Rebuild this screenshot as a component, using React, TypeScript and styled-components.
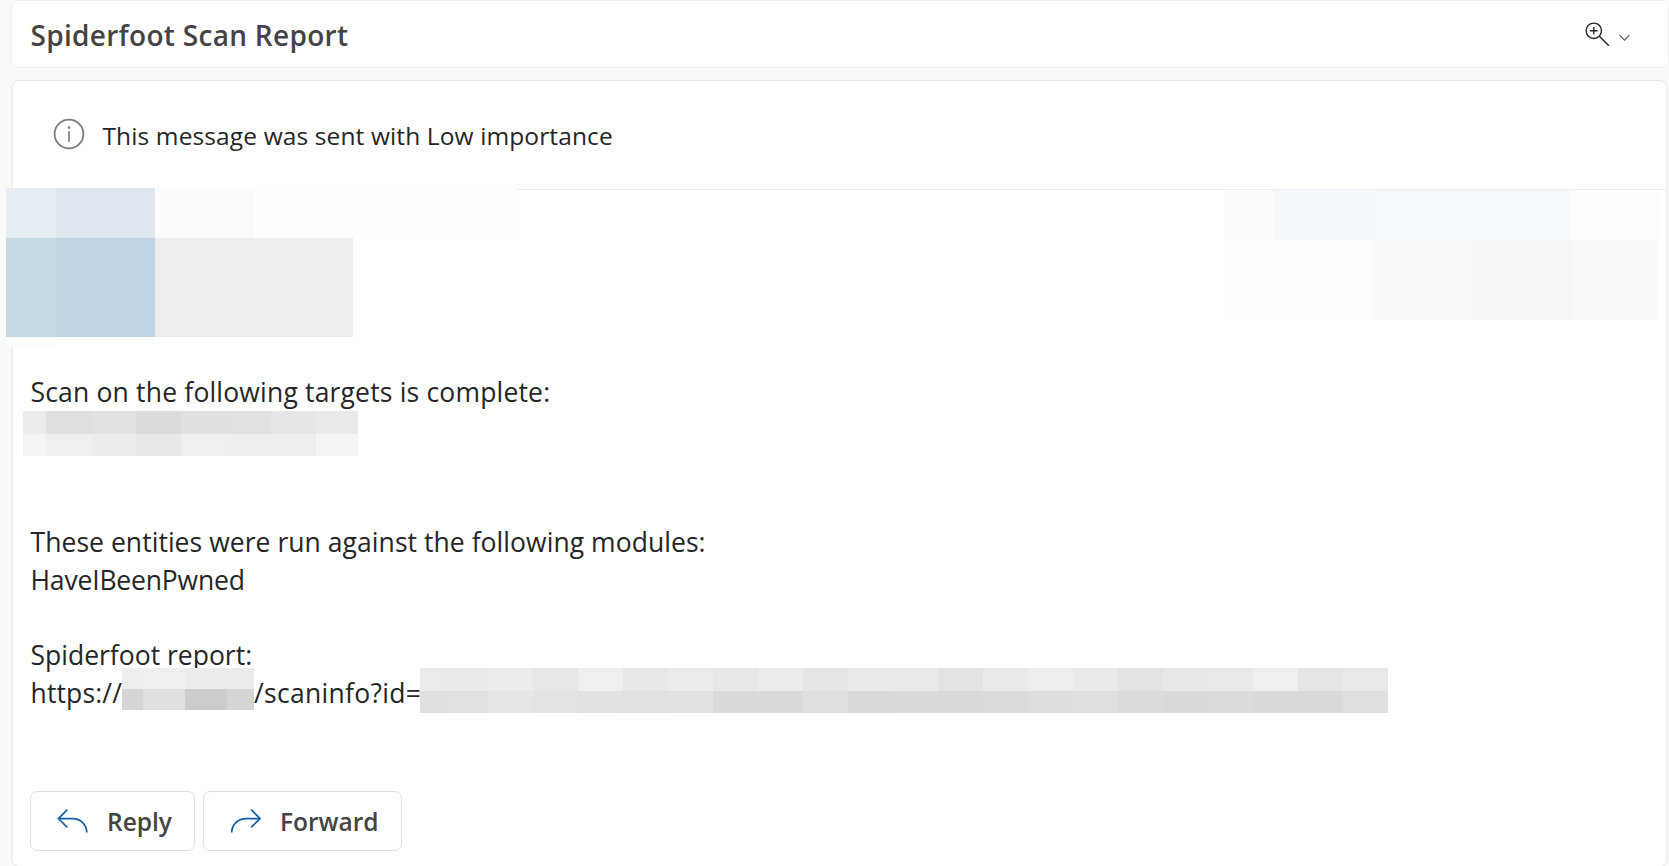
import React from "react";
import styled, { createGlobalStyle } from "styled-components";

const GlobalStyle = createGlobalStyle`
  * { box-sizing: border-box; }
  body {
    margin: 0;
    background: #fafafa;
    color: #262626;
    font-family: "Segoe UI", "Open Sans", "Noto Sans", sans-serif;
    overflow: hidden;
  }
`;

const Page = styled.div`
  display: flex;
  flex-direction: column;
  gap: 12px;
  height: 866px;
  padding-left: 11px;
  overflow: hidden;
`;

const Header = styled.header`
  display: flex;
  flex-shrink: 0;
  align-items: center;
  justify-content: space-between;
  height: 68px;
  padding: 0 38px 0 18.5px;
  background: #fff;
  border: 1px solid #efefef;
  border-radius: 7px;
`;

const Title = styled.h1`
  margin: 1px 0 0;
  font-size: 28px;
  font-weight: 600;
  line-height: 38px;
  letter-spacing: 0.3px;
  color: #444;
  white-space: nowrap;
`;

const ZoomButton = styled.button`
  display: flex;
  align-items: center;
  gap: 9px;
  padding: 0;
  border: 0;
  background: none;
`;

const Card = styled.main`
  display: flex;
  flex-direction: column;
  height: 787px;
  flex-shrink: 0;
  margin-right: 1px;
  background: #fff;
  border: 1px solid #e8e8e8;
  border-left: 2px solid #f0f0f0;
  border-right: 2px solid #f0f0f0;
  border-radius: 8px;
`;

const Notice = styled.div`
  display: flex;
  align-items: center;
  gap: 17.5px;
  height: 109px;
  padding: 0 0 2px 40px;
  border-bottom: 1px solid #ececec;
`;

const NoticeText = styled.span`
  padding-top: 2px;
  font-size: 24.5px;
  letter-spacing: 0.12px;
  white-space: nowrap;
`;

const Sender = styled.section`
  display: flex;
  justify-content: space-between;
  align-items: flex-start;
  height: 184px;
  padding-right: 8px;
`;

const Mosaic = styled.div<{ $cols: string; $rows: string; $margin?: string }>`
  position: relative;
  display: grid;
  flex-shrink: 0;
  grid-template-columns: ${(p) => p.$cols};
  grid-template-rows: ${(p) => p.$rows};
  margin: ${(p) => p.$margin ?? "0"};
`;

const Cell = styled.i<{ $tone: string }>`
  background: ${(p) => p.$tone};
`;

const Body = styled.section`
  padding-left: 17.5px;
`;

const Line = styled.div<{ $spacing?: number }>`
  display: flex;
  align-items: flex-start;
  height: 37.6px;
  font-size: 26.5px;
  line-height: 37.6px;
  letter-spacing: ${(p) => p.$spacing ?? 0}px;
  white-space: nowrap;
`;

const UrlPart = styled.span<{ $width: number; $spacing: number }>`
  width: ${(p) => p.$width}px;
  line-height: 36.4px;
  letter-spacing: ${(p) => p.$spacing}px;
`;

const Actions = styled.div`
  display: flex;
  gap: 8px;
  margin-top: 79px;
  padding-left: 17px;
`;

const Action = styled.button<{ $width: number }>`
  display: flex;
  align-items: center;
  gap: 19px;
  width: ${(p) => p.$width}px;
  height: 60px;
  padding: 0 0 1px 26px;
  border: 1px solid #dfdfdf;
  border-radius: 7px;
  background: #fff;
  color: #444;
  font-family: inherit;
  font-size: 24.5px;
  font-weight: 600;
`;

const ActionLabel = styled.span`
  padding-top: 1px;
`;

const senderTones = [
  "#e6eef4", "#dee6ef", "#fbfbfb", "#fefefe", "#fefefe",
  "#c6d8e3", "#c1d3e0", "#ededed", "#eeeeee", "#fff",
  "#fdfdfd", "#fff", "#fff", "#fff", "#fff",
];

const dateTones = [
  "#fbfcfd", "#f5f9fe", "#f6fafd", "#f6fafc", "#fcfdff",
  "#fcfdff", "#fcfdff", "#fafafa", "#f7f7f7", "#fafafa",
];

const targetTones = [
  "#ebebeb", "#dfdfdf", "#e2e2e2", "#dbdbdb", "#e0e0e0", "#e1e1e1", "#e6e6e6", "#e9e9e9",
  "#f4f4f4", "#efefef", "#ececec", "#e8e8e8", "#efefef", "#eeeeee", "#ededed", "#f4f4f4",
];

const hostTones = [
  "#eeeeee", "#efefef", "#ebebeb", "#ebebeb",
  "#d6d6d6", "#e0e0e0", "#cccccc", "#d5d5d5",
];

const idTones = [
  "#ebebeb", "#eaeaea", "#ececec", "#e7e7e7", "#efefef", "#e7e7e7", "#ebebeb", "#e7e7e7",
  "#ececec", "#e6e6e6", "#eaeaea", "#eaeaea", "#e3e3e3", "#eaeaea", "#eeeeee", "#eaeaea",
  "#e3e3e3", "#e7e7e7", "#e9e9e9", "#efefef", "#e5e5e5", "#e9e9e9",
  "#e0e0e0", "#e1e1e1", "#e6e6e6", "#e3e3e3", "#e2e2e2", "#e1e1e1", "#e2e2e2", "#dadada",
  "#dadada", "#dfdfdf", "#d9d9d9", "#dadada", "#dadada", "#dbdbdb", "#dedede", "#dfdfdf",
  "#dcdcdc", "#dadada", "#dcdcdc", "#dadada", "#dadada", "#dfdfdf",
];

const cells = (tones: string[]) => tones.map((tone, i) => <Cell key={i} $tone={tone} />);

const Magnifier = () => (
  <svg width="25" height="25" viewBox="0 0 25 25" fill="none" stroke="#262626" strokeWidth="1.4">
    <circle cx="8.8" cy="8.8" r="7.7" />
    <path d="M8.8 5v7.6M5 8.8h7.6M14.3 14.3l9.6 9.4" />
  </svg>
);

const Chevron = () => (
  <svg width="11" height="16" viewBox="0 0 11 16" fill="none" stroke="#555" strokeWidth="1.1">
    <path d="M0.5 9.2L5.5 14.2L10.5 9.2" />
  </svg>
);

const InfoIcon = () => (
  <svg width="32" height="32" viewBox="0 0 32 32" fill="none" stroke="#7d7d7d" strokeWidth="1.8">
    <circle cx="16" cy="16" r="14.4" />
    <path d="M16 13.3v10.4" strokeWidth="1.7" />
    <circle cx="16" cy="9.6" r="1.3" fill="#7d7d7d" stroke="none" />
  </svg>
);

const ReplyIcon = () => (
  <svg width="31" height="24" viewBox="0 0 31 24" fill="none" stroke="#1660a8" strokeWidth="1.7">
    <path d="M10.3 0.7L1.4 9.6L10.3 18.3M1.4 9.6H15.5C23.5 9.6 29.8 15.5 29.8 23.6" />
  </svg>
);

const ForwardIcon = () => (
  <svg width="31" height="24" viewBox="0 0 31 24" fill="none" stroke="#1660a8" strokeWidth="1.7">
    <path d="M21.2 0.7L30.1 9.6L21.2 18.3M30.1 9.6H16C8 9.6 1.7 15.5 1.7 23.6" />
  </svg>
);

export default function App() {
  return (
    <>
      <GlobalStyle />
      <Page>
        <Header>
          <Title>Spiderfoot Scan Report</Title>
          <ZoomButton aria-label="Zoom">
            <Magnifier />
            <Chevron />
          </ZoomButton>
        </Header>
        <Card>
          <Notice>
            <InfoIcon />
            <NoticeText>This message was sent with Low importance</NoticeText>
          </Notice>
          <Sender>
            <Mosaic $cols="50px 99px 99px 99px 164px" $rows="50px 99px 10px" $margin="-2px 0 0 -7px">
              {cells(senderTones)}
            </Mosaic>
            <Mosaic $cols="50px 99px 99px 99px 87px" $rows="50px 80px">
              {cells(dateTones)}
            </Mosaic>
          </Sender>
          <Body>
            <Line $spacing={0.18}>Scan on the following targets is complete:</Line>
            <Line>
              <Mosaic $cols="23px repeat(6, 45px) 42px" $rows="23px 22px" $margin="-0.6px 0 0 -7.5px">
                {cells(targetTones)}
              </Mosaic>
            </Line>
            <Line />
            <Line />
            <Line $spacing={0.05}>These entities were run against the following modules:</Line>
            <Line $spacing={-0.18}>HaveIBeenPwned</Line>
            <Line />
            <Line>Spiderfoot report:</Line>
            <Line>
              <UrlPart $width={91.5} $spacing={0.15}>https://</UrlPart>
              <Mosaic $cols="21px 42px 42px 27px" $rows="21px 21px" $margin="-7px 0 0">
                {cells(hostTones)}
              </Mosaic>
              <UrlPart $width={166} $spacing={0.3}>/scaninfo?id=</UrlPart>
              <Mosaic $cols="23px repeat(21, 45px)" $rows="23px 22px" $margin="-7px 0 0">
                {cells(idTones)}
              </Mosaic>
            </Line>
          </Body>
          <Actions>
            <Action $width={165}>
              <ReplyIcon />
              <ActionLabel>Reply</ActionLabel>
            </Action>
            <Action $width={199}>
              <ForwardIcon />
              <ActionLabel>Forward</ActionLabel>
            </Action>
          </Actions>
        </Card>
      </Page>
    </>
  );
}
